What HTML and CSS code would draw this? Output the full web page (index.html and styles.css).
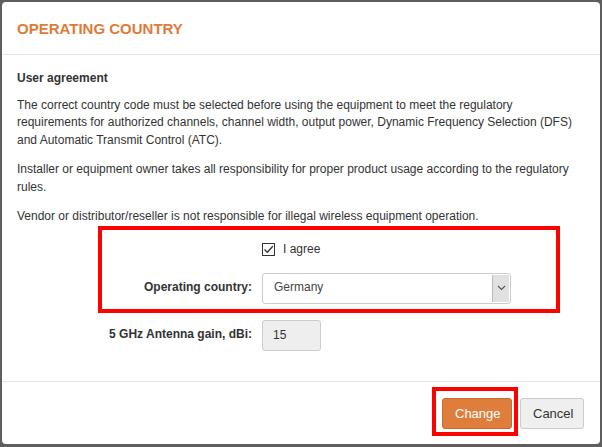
FILE: index.html
```html
<!DOCTYPE html>
<html lang="en">
<head>
    <meta charset="UTF-8">
    <title>Operating country</title>
    <link rel="stylesheet" href="styles.css">
</head>
<body>
    <div class="modal">
        <div class="modal-header">
            <h4 class="modal-title">OPERATING COUNTRY</h4>
        </div>
        <div class="modal-body">
            <p class="lead">User agreement</p>
            <p>The correct country code must be selected before using the equipment to meet the regulatory requirements for authorized channels, channel width, output power, Dynamic Frequency Selection (DFS) and Automatic Transmit Control (ATC).</p>
            <p>Installer or equipment owner takes all responsibility for proper product usage according to the regulatory rules.</p>
            <p class="last">Vendor or distributor/reseller is not responsible for illegal wireless equipment operation.</p>

            <div class="highlight">
                <div class="form-row check-row">
                    <span class="form-label"></span>
                    <label class="checkbox">
                        <span class="check-box">
                            <svg width="11" height="11" viewBox="0 0 11 11"><path d="M1.5 5.5 L4.3 8.3 L9.8 2.3" fill="none" stroke="#333" stroke-width="1.3"/></svg>
                        </span>
                        I agree
                    </label>
                </div>
                <div class="form-row">
                    <label class="form-label">Operating country:</label>
                    <div class="select">
                        <span class="select-value">Germany</span>
                        <span class="select-arrow">
                            <svg width="9" height="6" viewBox="0 0 9 6"><path d="M1 1 L4.5 4.5 L8 1" fill="none" stroke="#555" stroke-width="1.1"/></svg>
                        </span>
                    </div>
                </div>
            </div>

            <div class="form-row gain-row">
                <label class="form-label">5 GHz Antenna gain, dBi:</label>
                <div class="input-disabled">15</div>
            </div>
        </div>
        <div class="modal-footer">
            <span class="btn-mark"><button class="btn btn-primary">Change</button></span>
            <button class="btn btn-default">Cancel</button>
        </div>
    </div>
</body>
</html>
```
FILE: styles.css
```css
body {
    margin: 0;
    background-color: #5e5e5e;
    font-family: "Liberation Sans", Arial, sans-serif;
    font-size: 12px;
    color: #333;
}
.modal {
    margin: 2px 0 0 2px;
    width: 598px;
    height: 442px;
    background-color: #fff;
    border-radius: 4px;
    display: flex;
    flex-direction: column;
}
.modal-header {
    padding: 15px 15px 13px;
    border-bottom: 1px solid #e5e5e5;
}
.modal-title {
    margin: 0;
    font-size: 15px;
    line-height: 24px;
    color: #e07b39;
    font-weight: bold;
}
.modal-body {
    flex: 1;
    padding: 15px 15px 0;
    line-height: 17.5px;
}
.modal-body p {
    margin: 0 0 12px;
}
.modal-body .lead {
    font-weight: bold;
    margin-bottom: 9px;
}
.modal-body .last {
    margin-bottom: 0;
}
.highlight {
    margin: 0 25px 0 81px;
    border: 4px solid #f00;
    padding: 10px 0 5px;
}
.form-row {
    display: flex;
    align-items: center;
}
.form-label {
    width: 150px;
    padding-right: 10px;
    text-align: right;
    font-weight: bold;
    flex-shrink: 0;
}
.check-row {
    height: 20px;
    margin-bottom: 13px;
}
.checkbox {
    display: flex;
    align-items: center;
    gap: 8px;
    font-size: 12px;
}
.check-box {
    width: 11px;
    height: 11px;
    border: 1px solid #333;
    display: flex;
    align-items: center;
    justify-content: center;
}
.select {
    width: 247px;
    height: 29px;
    border: 1px solid #ccc;
    border-radius: 3px;
    display: flex;
    align-items: center;
    justify-content: space-between;
}
.select-value {
    padding-left: 11px;
    color: #444;
}
.select-arrow {
    width: 16px;
    height: 27px;
    margin-right: 1px;
    background-color: #e1e1e1;
    border-left: 1px solid #bbb;
    display: flex;
    align-items: center;
    justify-content: center;
}
.gain-row {
    margin: 7px 0 0 85px;
}
.input-disabled {
    width: 47px;
    height: 29px;
    line-height: 29px;
    padding-left: 10px;
    border: 1px solid #ccc;
    border-radius: 3px;
    background-color: #eee;
}
.modal-footer {
    border-top: 1px solid #e5e5e5;
    padding: 5px 16px 8px 15px;
    display: flex;
    justify-content: flex-end;
    align-items: flex-start;
    gap: 2px;
}
.btn-mark {
    display: flex;
    border: 4px solid #f00;
    padding: 7px 2px 3px 6px;
}
.btn {
    font-family: "Liberation Sans", Arial, sans-serif;
    font-size: 13px;
    height: 31px;
    padding: 0 12px;
    border-radius: 3px;
    cursor: pointer;
}
.btn-primary {
    background-color: #df7e3c;
    border: 1px solid #c96d2f;
    color: #fff;
    width: 70px;
}
.btn-default {
    margin-top: 11px;
    background-color: #efefef;
    border: 1px solid #ccc;
    color: #333;
    width: 64px;
}
```
